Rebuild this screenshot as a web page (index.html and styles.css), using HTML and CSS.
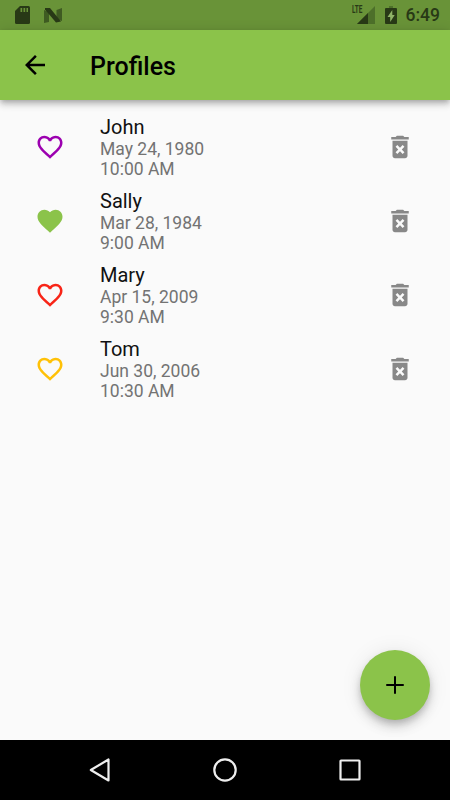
FILE: index.html
```html
<!DOCTYPE html>
<html lang="en">
<head>
    <meta charset="UTF-8">
    <meta name="viewport" content="width=device-width, initial-scale=1.0">
    <title>Profiles</title>
    <link rel="stylesheet" href="styles.css">
</head>
<body>
    <!-- Shared icons -->
    <svg class="defs">
        <symbol id="heart-outline" viewBox="0 0 24 24">
            <path d="M16.5 3c-1.74 0-3.41.81-4.5 2.09C10.91 3.81 9.24 3 7.5 3 4.42 3 2 5.42 2 8.5c0 3.78 3.4 6.86 8.55 11.54L12 21.35l1.45-1.32C18.6 15.36 22 12.28 22 8.5 22 5.42 19.58 3 16.5 3zm-4.4 15.55l-.1.1-.1-.1C7.14 14.24 4 11.39 4 8.5 4 6.5 5.5 5 7.5 5c1.54 0 3.04.99 3.57 2.36h1.87C13.46 5.99 14.96 5 16.5 5c2 0 3.5 1.5 3.5 3.5 0 2.89-3.14 5.74-7.9 10.05z"/>
        </symbol>
        <symbol id="heart" viewBox="0 0 24 24">
            <path d="M12 21.35l-1.45-1.32C5.4 15.36 2 12.28 2 8.5 2 5.42 4.42 3 7.5 3c1.74 0 3.41.81 4.5 2.09C13.09 3.81 14.76 3 16.5 3 19.58 3 22 5.42 22 8.5c0 3.78-3.4 6.86-8.55 11.54L12 21.35z"/>
        </symbol>
        <symbol id="trash" viewBox="0 0 24 24">
            <path d="M6 19c0 1.1.9 2 2 2h8c1.1 0 2-.9 2-2V7H6v12zm2.46-7.12l1.41-1.41L12 12.59l2.12-2.12 1.41 1.41L13.41 14l2.12 2.12-1.41 1.41L12 15.41l-2.12 2.12-1.41-1.41L10.59 14l-2.13-2.12zM15.5 4l-1-1h-5l-1 1H5v2h14V4z"/>
        </symbol>
    </svg>

    <div class="status-bar">
        <svg class="sd-icon" viewBox="0 0 15 18">
            <path d="M5 0h8.500a1.500 1.500 0 0 1 1.500 1.500v15a1.500 1.500 0 0 1-1.500 1.500h-12A1.500 1.500 0 0 1 0 16.500V5z"/>
            <path class="pins" d="M5.500 2h1.700v4H5.500zM8.500 2h1.700v4H8.500zM11.500 2h1.500v4h-1.500z"/>
        </svg>
        <svg class="n-icon" viewBox="0 0 18 15">
            <path class="n-side" d="M0 2l5 2v10l-5 1zM12.500 2L18 0v13l-5.500-2z"/>
            <path d="M1 0h5l11 13.500-5 1L1 1.500z"/>
        </svg>
        <div class="status-right">
            <span class="lte">LTE</span>
            <svg class="signal-icon" viewBox="0 0 18 18">
                <path class="weak" d="M18 0v18H0z"/>
                <path d="M11 7v11H0z"/>
            </svg>
            <svg class="battery-icon" viewBox="0 0 12 18">
                <path class="weak" d="M4 0h4v3H4z"/>
                <path d="M1 2h10a1 1 0 0 1 1 1v14a1 1 0 0 1-1 1H1a1 1 0 0 1-1-1V3a1 1 0 0 1 1-1z"/>
                <path class="bolt" d="M7.300 4L2.500 11h2.700v5L9.700 9H7.300z"/>
            </svg>
            <span class="clock">6:49</span>
        </div>
    </div>

    <header class="app-bar">
        <svg class="icon" viewBox="0 0 24 24">
            <path d="M20 11H7.830l5.590-5.590L12 4l-8 8 8 8 1.410-1.410L7.830 13H20v-2z"/>
        </svg>
        <h1>Profiles</h1>
    </header>

    <main>
        <ul class="profiles">
            <li class="profile">
                <svg class="icon purple"><use href="#heart-outline"/></svg>
                <div class="info">
                    <h2>John</h2>
                    <p>May 24, 1980<br>10:00 AM</p>
                </div>
                <svg class="icon delete"><use href="#trash"/></svg>
            </li>
            <li class="profile">
                <svg class="icon green"><use href="#heart"/></svg>
                <div class="info">
                    <h2>Sally</h2>
                    <p>Mar 28, 1984<br>9:00 AM</p>
                </div>
                <svg class="icon delete"><use href="#trash"/></svg>
            </li>
            <li class="profile">
                <svg class="icon red"><use href="#heart-outline"/></svg>
                <div class="info">
                    <h2>Mary</h2>
                    <p>Apr 15, 2009<br>9:30 AM</p>
                </div>
                <svg class="icon delete"><use href="#trash"/></svg>
            </li>
            <li class="profile">
                <svg class="icon amber"><use href="#heart-outline"/></svg>
                <div class="info">
                    <h2>Tom</h2>
                    <p>Jun 30, 2006<br>10:30 AM</p>
                </div>
                <svg class="icon delete"><use href="#trash"/></svg>
            </li>
        </ul>
        <div class="fab">
            <svg class="icon" viewBox="0 0 24 24"><path d="M19 12.800h-6.200v6.200h-1.600v-6.200H5v-1.600h6.200V5h1.600v6.200H19z"/></svg>
        </div>
    </main>

    <nav class="nav-bar">
        <svg viewBox="0 0 30 30"><path d="M5.800 15L23.500 4.500v21z"/></svg>
        <svg viewBox="0 0 30 30"><circle cx="15" cy="15" r="10.700"/></svg>
        <svg viewBox="0 0 30 30"><rect x="5.500" y="5.500" width="19" height="19" rx="0.500"/></svg>
    </nav>
</body>
</html>
```

FILE: styles.css
```css
* {
    box-sizing: border-box;
    margin: 0;
    padding: 0;
}
body {
    display: flex;
    flex-direction: column;
    height: 100vh;
    overflow: hidden;
    font-family: Roboto, sans-serif;
    background-color: #fafafa;
}
svg {
    display: block;
    flex: none;
}
.defs {
    position: absolute;
    width: 0;
    height: 0;
}
.icon {
    width: 30px;
    height: 30px;
}

/* Status bar */
.status-bar {
    display: flex;
    align-items: center;
    flex: none;
    height: 30px;
    padding: 0 10px 0 15px;
    background-color: #699338;
    color: #283916;
    fill: #283916;
}
.sd-icon {
    width: 15px;
    height: 18px;
}
.pins {
    fill: #699338;
}
.n-icon {
    width: 18px;
    height: 15px;
    margin-left: 14px;
}
.n-side {
    fill: #3f5b22;
}
.status-right {
    display: flex;
    align-items: center;
    margin-left: auto;
}
.lte {
    align-self: flex-start;
    width: 16px;
    margin-top: 4px;
    margin-right: -11px;
    font-size: 10px;
    font-weight: 700;
    line-height: 12px;
    transform: scaleX(0.64);
    transform-origin: left;
}
.signal-icon {
    width: 18px;
    height: 18px;
}
.weak {
    fill: #4d702a;
}
.battery-icon {
    width: 12px;
    height: 18px;
    margin-left: 10px;
}
.bolt {
    fill: #8fb267;
}
.clock {
    margin-left: 9px;
    padding-top: 1px;
    font-size: 17.5px;
    font-weight: 500;
    line-height: 29px;
}

/* App bar */
.app-bar {
    display: flex;
    align-items: center;
    flex: none;
    height: 70px;
    padding-left: 20px;
    background-color: #8bc34a;
    box-shadow: 0 2px 5px -1px rgba(0, 0, 0, 0.2), 0 5px 6px rgba(0, 0, 0, 0.14), 0 1px 12px rgba(0, 0, 0, 0.12);
}
.app-bar h1 {
    margin-left: 40px;
    padding-top: 2px;
    font-size: 25px;
    font-weight: 500;
}

/* Profile list */
main {
    position: relative;
    flex: 1;
}
.profiles {
    padding-top: 10px;
    list-style: none;
}
.profile {
    display: flex;
    align-items: center;
    height: 73.9px;
    padding: 0 35px;
}
.info {
    flex: 1;
    margin-left: 35px;
}
.info h2 {
    font-size: 20px;
    font-weight: 400;
    line-height: 24px;
    color: #111;
}
.info p {
    font-size: 17.5px;
    line-height: 20px;
    color: #737373;
}
.purple {
    fill: #9c00b0;
}
.green {
    fill: #8bc34a;
}
.red {
    fill: #f82417;
}
.amber {
    fill: #ffc107;
}
.delete {
    fill: #888;
}
.fab {
    position: absolute;
    right: 20px;
    bottom: 20px;
    display: flex;
    align-items: center;
    justify-content: center;
    width: 70px;
    height: 70px;
    border-radius: 50%;
    background-color: #8bc34a;
    box-shadow: 0 4px 6px -1px rgba(0, 0, 0, 0.16), 0 7px 12px rgba(0, 0, 0, 0.14), 0 1px 22px rgba(0, 0, 0, 0.08);
}

/* Navigation bar */
.nav-bar {
    display: flex;
    align-items: center;
    justify-content: space-between;
    flex: none;
    height: 60px;
    padding: 0 85px;
    background-color: #000;
}
.nav-bar svg {
    width: 30px;
    height: 30px;
    fill: none;
    stroke: #eee;
    stroke-width: 2.2;
    stroke-linejoin: round;
}
```
